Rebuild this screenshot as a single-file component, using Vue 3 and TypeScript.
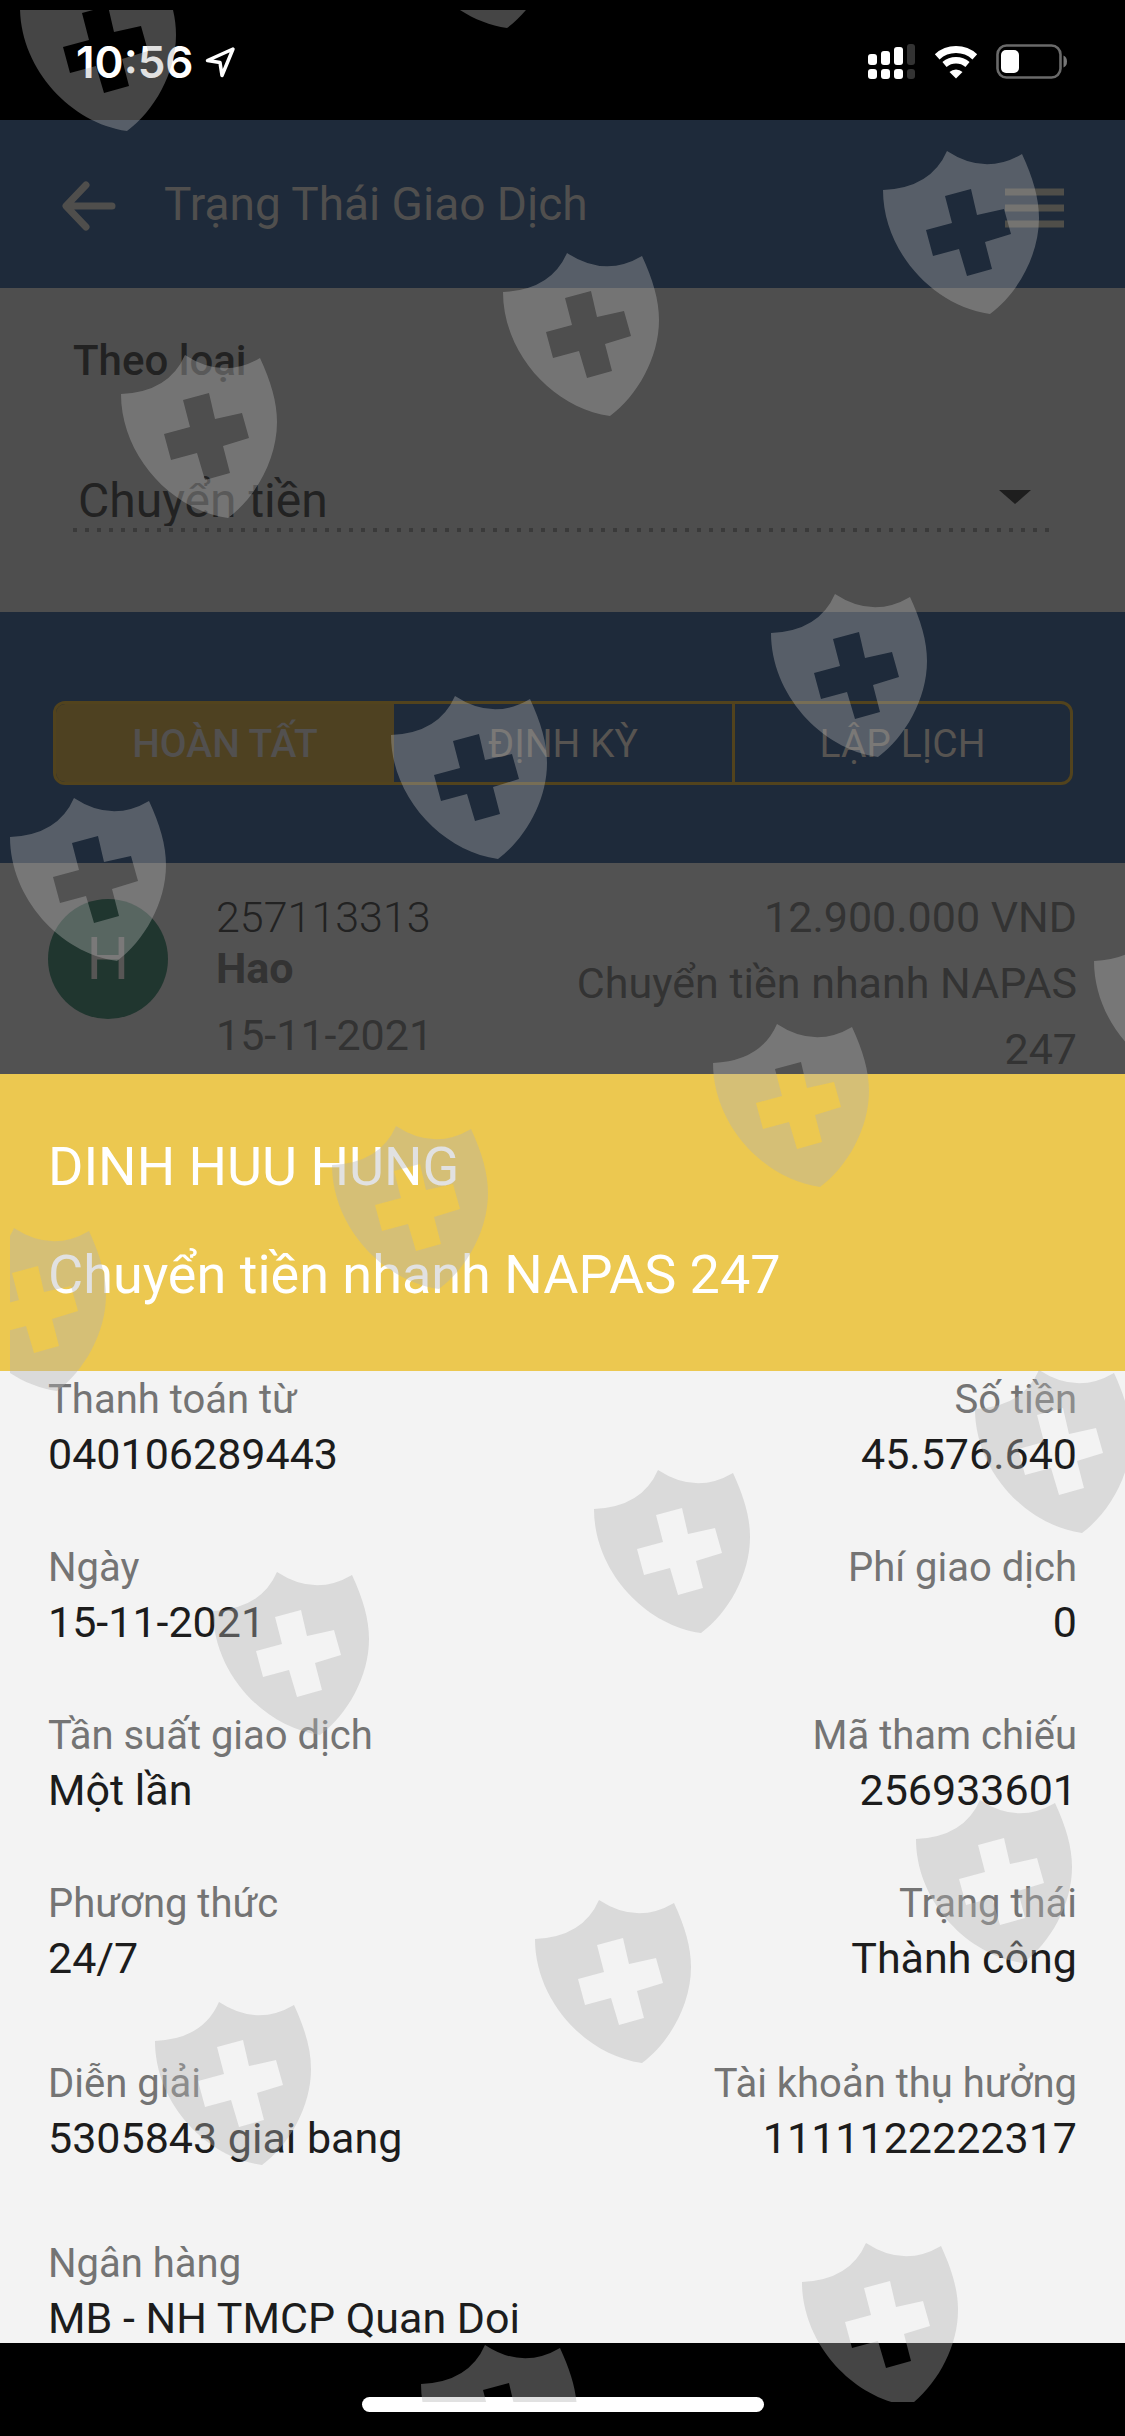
<script setup lang="ts">
import { ref } from 'vue'

interface Field {
  label: string
  value: string
}

const kinds: string[] = ['Chuyển tiền']
const kind = ref<string>(kinds[0])

const tabs: string[] = ['HOÀN TẤT', 'ĐỊNH KỲ', 'LẬP LỊCH']
const activeTab = ref<string>(tabs[0])

const rows: Field[][] = [
  [
    { label: 'Thanh toán từ', value: '040106289443' },
    { label: 'Số tiền', value: '45.576.640' },
  ],
  [
    { label: 'Ngày', value: '15-11-2021' },
    { label: 'Phí giao dịch', value: '0' },
  ],
  [
    { label: 'Tần suất giao dịch', value: 'Một lần' },
    { label: 'Mã tham chiếu', value: '256933601' },
  ],
  [
    { label: 'Phương thức', value: '24/7' },
    { label: 'Trạng thái', value: 'Thành công' },
  ],
  [
    { label: 'Diễn giải', value: '5305843 giai bang' },
    { label: 'Tài khoản thụ hưởng', value: '1111122222317' },
  ],
  [{ label: 'Ngân hàng', value: 'MB - NH TMCP Quan Doi' }],
]

// Top-left corner of every shield in the watermark layer
const shields: [number, number][] = [
  [10, -42], [390, -145],
  [873, 141], [493, 243], [111, 345],
  [761, 584], [381, 686], [0, 788],
  [1084, 912], [703, 1014], [322, 1116], [-60, 1218],
  [965, 1360], [584, 1460], [203, 1562],
  [906, 1790], [525, 1890], [145, 1992],
  [792, 2233], [411, 2335],
]
</script>

<template>
  <div class="screen">
    <div class="status">
      <div class="clock">
        <span>10:56</span>
        <svg width="32" height="32" viewBox="0 0 32 32" aria-hidden="true">
          <path d="M28 3 2.500 14.500 15 16.500 17 29.500Z" fill="none" stroke="#fff" stroke-width="3.500" stroke-linejoin="round" />
        </svg>
      </div>
      <div class="indicators">
        <svg width="48" height="35" viewBox="0 0 48 35" aria-hidden="true">
          <g fill="#fff">
            <rect x="0" y="10" width="9" height="11" rx="3" />
            <rect x="13" y="7" width="9" height="14" rx="3" />
            <rect x="26" y="3" width="9" height="18" rx="3" />
            <rect x="0" y="25" width="9" height="10" rx="3" />
            <rect x="13" y="25" width="9" height="10" rx="3" />
            <rect x="26" y="25" width="9" height="10" rx="3" />
          </g>
          <g fill="#333">
            <rect x="39" y="0" width="8" height="21" rx="3" />
            <rect x="39" y="25" width="8" height="10" rx="3" />
          </g>
        </svg>
        <svg width="44" height="34" viewBox="0 0 44 34" aria-hidden="true">
          <g fill="none" stroke="#fff">
            <path d="M3.200 11.800A28 28 0 0 1 40.800 11.800" stroke-width="7" />
            <path d="M10.500 19.500A18 18 0 0 1 33.500 19.500" stroke-width="6.500" />
          </g>
          <path d="M22 33.500 15.500 27A9.500 9.500 0 0 1 28.500 27Z" fill="#fff" />
        </svg>
        <svg width="72" height="35" viewBox="0 0 72 35" aria-hidden="true">
          <rect x="1.500" y="1.500" width="63" height="32" rx="9" fill="none" stroke="#6a6a6a" stroke-width="2.600" />
          <rect x="5" y="6" width="18" height="23" rx="5" fill="#fff" />
          <path d="M67.500 11.500Q71 13 71 17.500T67.500 23.500Z" fill="#777" />
        </svg>
      </div>
    </div>

    <header class="bar">
      <button class="icon" type="button" aria-label="Quay lại">
        <svg width="56" height="56" viewBox="0 0 56 56">
          <path d="M26 9 6 30 26 51M7 30H52" fill="none" stroke="#4f4e4c" stroke-width="7" stroke-linecap="round" stroke-linejoin="round" />
        </svg>
      </button>
      <h1>Trạng Thái Giao Dịch</h1>
      <button class="icon" type="button" aria-label="Menu">
        <svg width="60" height="48" viewBox="0 0 60 48">
          <path d="M0 12H59M0 28H59M0 44H59" stroke="#4f4e49" stroke-width="7" />
        </svg>
      </button>
    </header>

    <section class="filter">
      <label for="kind">Theo loại</label>
      <div class="picker">
        <select id="kind" v-model="kind">
          <option v-for="k in kinds" :key="k">{{ k }}</option>
        </select>
        <svg width="32" height="14" viewBox="0 0 32 14" aria-hidden="true">
          <path d="M0 0H32L16 14Z" fill="#1e1e1e" />
        </svg>
      </div>
    </section>

    <nav class="tabs-area">
      <div class="tabs">
        <button
          v-for="t in tabs"
          :key="t"
          type="button"
          :class="{ active: t === activeTab }"
          @click="activeTab = t"
        >{{ t }}</button>
      </div>
    </nav>

    <article class="entry">
      <div class="avatar">H</div>
      <div class="who">
        <span class="ref">257113313</span>
        <strong>Hao</strong>
        <time datetime="2021-11-15">15-11-2021</time>
      </div>
      <div class="what">
        <span>12.900.000 VND</span>
        <span>Chuyển tiền nhanh NAPAS 247</span>
      </div>
    </article>

    <div class="sheet-head">
      <h2>DINH HUU HUNG</h2>
      <p>Chuyển tiền nhanh NAPAS 247</p>
    </div>

    <dl class="details">
      <div v-for="(row, i) in rows" :key="i" class="row">
        <div v-for="f in row" :key="f.label" class="field">
          <dt>{{ f.label }}</dt>
          <dd>{{ f.value }}</dd>
        </div>
      </div>
    </dl>

    <footer class="home"><span></span></footer>

    <div class="watermark" aria-hidden="true">
      <svg width="100%" height="100%">
        <defs>
          <path
            id="shield"
            fill-rule="evenodd"
            d="M0 39Q48 37 64 0Q102 25 139 3C150 27 156 47 156 67C156 105 134 143 107 163C50 155 0 100 0 39Z
               M62 45 88 38 94 64 121 58 128 83 102 91 109 118 84 125 76 98 50 105 43 79 69 72Z"
          />
        </defs>
        <use v-for="([x, y], i) in shields" :key="i" href="#shield" :x="x" :y="y" />
      </svg>
    </div>
  </div>
</template>

<style>
body {
  margin: 0;
  background: #000;
}
</style>

<style scoped>
.screen {
  position: relative;
  display: flex;
  flex-direction: column;
  min-height: 100vh;
  overflow: hidden;
  background: #000;
  font-family: Roboto, 'Noto Sans', sans-serif;
  font-size: 43px;
}

button,
select {
  margin: 0;
  padding: 0;
  border: 0;
  background: none;
  font: inherit;
  color: inherit;
}

h1,
h2,
p,
dl,
dd {
  margin: 0;
  font-weight: 400;
}

svg {
  display: block;
}

.status {
  display: flex;
  flex: none;
  justify-content: space-between;
  align-items: center;
  height: 120px;
  padding: 3px 57px 0 76px;
  box-sizing: border-box;
  color: #fff;
}

.clock {
  display: flex;
  align-items: center;
  gap: 12px;
  font-family: Inter, sans-serif;
  font-size: 44px;
  font-weight: 600;
}

.indicators {
  display: flex;
  align-items: center;
  gap: 18px;
}

.bar {
  display: flex;
  flex: none;
  align-items: center;
  height: 168px;
  padding: 0 60px;
  background: #1e2a3a;
  color: #504f4e;
}

.bar h1 {
  flex: 1;
  margin-left: 48px;
  font-size: 46px;
}

.filter {
  flex: none;
  padding: 49px 70px 80px 73px;
  background: #4e4e4e;
  color: #222;
}

.filter label {
  display: block;
  margin-bottom: 87px;
  font-size: 42px;
  line-height: 48px;
  font-weight: 500;
}

.picker {
  position: relative;
  display: flex;
  align-items: flex-start;
  height: 60px;
  background: repeating-linear-gradient(90deg, #3a3a3a 0 4px, transparent 4px 12px) 0 100% / 100% 4px no-repeat;
}

.picker select {
  flex: 1;
  height: 54px;
  padding-left: 5px;
  appearance: none;
  font-size: 48px;
}

.picker svg {
  position: absolute;
  top: 18px;
  right: 24px;
  pointer-events: none;
}

.tabs-area {
  flex: none;
  padding: 89px 52px 78px 53px;
  background: #1e2a3a;
}

.tabs {
  display: grid;
  grid-template-columns: repeat(3, 1fr);
  height: 84px;
  box-sizing: border-box;
  overflow: hidden;
  border: 3px solid #52431d;
  border-radius: 12px;
}

.tabs button {
  padding-top: 2px;
  color: #575451;
  font-size: 39px;
}

.tabs button + button {
  border-left: 3px solid #52431d;
}

.tabs button.active {
  background: #4e4121;
  color: #52504f;
  font-weight: 500;
}

.tabs button.active + button {
  border-left: 0;
}

.entry {
  display: flex;
  flex: none;
  box-sizing: border-box;
  height: 211px;
  padding: 21px 48px 0;
  background: #525252;
  color: #333;
  line-height: 66px;
}

.avatar {
  flex: none;
  width: 120px;
  height: 120px;
  margin: 15px 48px 0 0;
  border-radius: 50%;
  background: #20362f;
  color: #575655;
  font-size: 60px;
  line-height: 120px;
  text-align: center;
}

.who,
.what {
  display: flex;
  flex-direction: column;
}

.who .ref {
  color: #222;
  font-weight: 300;
}

.who strong {
  margin-top: -8px;
  line-height: 52px;
}

.who time {
  margin-top: 8px;
}

.what {
  flex: 1;
  padding-left: 120px;
  text-align: right;
}

.sheet-head {
  flex: none;
  padding: 57px 48px 60px;
  background: #ecc850;
  color: #fff;
  font-size: 54px;
  line-height: 72px;
}

.sheet-head h2 {
  margin-bottom: 36px;
  font-size: 54px;
}

.details {
  flex: 1;
  padding: 0 48px;
  background: #f3f3f3;
  color: #1c1c1c;
}

.row {
  display: flex;
  justify-content: space-between;
  margin-bottom: 60px;
}

.row:nth-child(n + 4) {
  margin-bottom: 72px;
}

.row:last-child {
  margin-bottom: 0;
}

.field + .field {
  text-align: right;
}

.field dt {
  color: #747474;
  font-size: 40px;
  line-height: 58px;
}

.field dd {
  line-height: 50px;
}

.home {
  display: flex;
  flex: none;
  justify-content: center;
  padding: 54px 0 24px;
}

.home span {
  width: 36%;
  max-width: 402px;
  height: 15px;
  border-radius: 8px;
  background: #fff;
}

.watermark {
  position: absolute;
  inset: 10px 0 34px 10px;
  overflow: hidden;
  pointer-events: none;
  fill: #b3b3b3;
  fill-opacity: 0.39;
}
</style>
